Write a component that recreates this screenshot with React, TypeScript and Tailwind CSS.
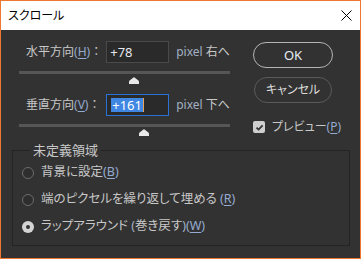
import React from "react";

const M = ({ k }: { k: string }) => (
  <span className="text-[#94abd0]">
    (<span className="underline underline-offset-[2px] decoration-1">{k}</span>)
  </span>
);

const Colon = () => <span className="[font-feature-settings:normal]">：</span>;

const Thumb = () => (
  <svg width="10" height="7" viewBox="0 0 10 7">
    <path d="M5 0.3 Q5.6 0.3 6.2 0.9 L9.4 3.6 Q10 4.1 10 5 L10 7 L0 7 L0 5 Q0 4.1 0.6 3.6 L3.8 0.9 Q4.4 0.3 5 0.3 Z" fill="#e8e8e8" />
  </svg>
);

const Radio = ({ on }: { on?: boolean }) =>
  on ? (
    <span className="w-[12px] h-[12px] rounded-full bg-[#d4d4d4] flex items-center justify-center shrink-0">
      <span className="w-[4px] h-[4px] rounded-full bg-[#333333]" />
    </span>
  ) : (
    <span className="w-[12px] h-[12px] rounded-full border border-[#6c6c6c] bg-[#2e2e2e] shrink-0" />
  );

export default function App() {
  return (
    <div className="w-[361px] h-[259px] border border-[#f0772f] flex flex-col bg-[#323232] overflow-hidden font-['Noto_Sans','Noto_Sans_CJK_JP',sans-serif] [font-feature-settings:'palt'] text-[#c8c8c8]">
      {/* title bar */}
      <div className="h-[29px] bg-white flex items-center justify-between pl-[7px] pr-[8px] shrink-0">
        <span className="text-[12px] text-black leading-none">スクロール</span>
        <svg width="11" height="11" viewBox="0 0 11 11">
          <path d="M0.5 0.5 L10.5 10.5 M10.5 0.5 L0.5 10.5" stroke="#000" strokeWidth="1" />
        </svg>
      </div>

      <div className="flex-1 flex flex-col">
        <div className="flex pt-[11px] pl-[18px]">
          {/* left column */}
          <div className="w-[211px] flex flex-col">
            <div className="flex items-center h-[22px]">
              <span className="w-[90px] pl-[7px] text-[12px] leading-none whitespace-nowrap">
                水平方向<M k="H" /><Colon />
              </span>
              <div className="w-[65px] h-[22px] border border-[#4a4a4a] bg-[#2a2a2a] flex items-center pl-[3px] text-[13px] text-[#e4e8ee] leading-none">
                +78
              </div>
              <span className="ml-[7px] text-[12px] leading-none whitespace-nowrap">
                <span className="text-[#a3b0c4]">pixel</span> 右へ
              </span>
            </div>
            <div className="mt-[8px] h-[3px] bg-[#565656]" />
            <div className="mt-[3px] ml-[110px] flex">
              <Thumb />
            </div>

            <div className="flex items-center h-[22px] mt-[10px]">
              <span className="w-[90px] pl-[7px] text-[12px] leading-none whitespace-nowrap">
                垂直方向<M k="V" /><Colon />
              </span>
              <div className="w-[65px] h-[22px] border border-[#2b72d6] bg-[#2a2a2a] flex items-center pl-[4px] text-[13px] leading-none">
                <span className="bg-[#3f87e2] text-white h-[14px] flex items-center px-[1px]">+161</span>
                <span className="w-[1px] h-[14px] bg-[#e9a45e]" />
              </div>
              <span className="ml-[7px] text-[12px] leading-none whitespace-nowrap">
                <span className="text-[#a3b0c4]">pixel</span> 下へ
              </span>
            </div>
            <div className="mt-[8px] h-[3px] bg-[#565656]" />
            <div className="mt-[2px] ml-[120px] flex">
              <Thumb />
            </div>
          </div>

          {/* right column */}
          <div className="ml-[23px] flex flex-col pt-[1px]">
            <button className="w-[80px] h-[26px] rounded-full border-[1.5px] border-[#b4b4b4] flex items-center justify-center text-[13px] text-[#e8ecf2] leading-none">
              OK
            </button>
            <button className="mt-[9px] ml-[1px] w-[78px] h-[26px] rounded-full border-[1.5px] border-[#5a5a5a] flex items-center justify-center text-[12px] text-[#dcdcdc] leading-none">
              キャンセル
            </button>
            <div className="mt-[18px] flex items-center">
              <span className="w-[12px] h-[12px] rounded-[2px] bg-[#cfcfcf] flex items-center justify-center">
                <svg width="9" height="9" viewBox="0 0 9 9">
                  <path d="M1.5 4.6 L3.6 6.6 L7.6 2.4" stroke="#333" strokeWidth="1.8" fill="none" />
                </svg>
              </span>
              <span className="ml-[7px] text-[12px] leading-none whitespace-nowrap">
                プレビュー<M k="P" />
              </span>
            </div>
          </div>
        </div>

        {/* group box */}
        <div className="relative mt-[14px] ml-[11px] mr-[10px] h-[96px] border border-[#242424] pt-[8px] pl-[9px] flex flex-col">
          <span className="absolute left-[17px] -top-[9px] h-[16px] px-[3px] bg-[#323232] text-[13px] leading-[16px] whitespace-nowrap">
            未定義領域
          </span>
          <div className="h-[27px] flex items-center gap-[7px] text-[12.5px] leading-none whitespace-nowrap">
            <Radio />
            <span>背景に設定<M k="B" /></span>
          </div>
          <div className="h-[27px] flex items-center gap-[7px] text-[12.5px] leading-none whitespace-nowrap">
            <Radio />
            <span>端のピクセルを繰り返して埋める <M k="R" /></span>
          </div>
          <div className="h-[27px] flex items-center gap-[7px] text-[12.5px] leading-none whitespace-nowrap">
            <Radio on />
            <span>
              ラップアラウンド <span className="text-[#a3b0c4]">(</span>巻き戻す<span className="text-[#a3b0c4]">)</span><M k="W" />
            </span>
          </div>
        </div>
      </div>
    </div>
  );
}
